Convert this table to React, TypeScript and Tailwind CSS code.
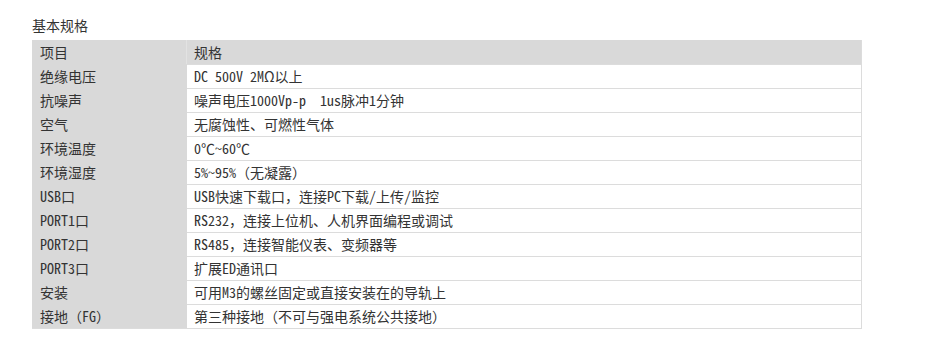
const rows: [string, string][] = [
  ['绝缘电压', 'DC 500V 2MΩ以上'],
  ['抗噪声', '噪声电压1000Vp-p  1us脉冲1分钟'],
  ['空气', '无腐蚀性、可燃性气体'],
  ['环境温度', '0℃~60℃'],
  ['环境湿度', '5%~95%（无凝露）'],
  ['USB口', 'USB快速下载口，连接PC下载/上传/监控'],
  ['PORT1口', 'RS232，连接上位机、人机界面编程或调试'],
  ['PORT2口', 'RS485，连接智能仪表、变频器等'],
  ['PORT3口', '扩展ED通讯口'],
  ['安装', '可用M3的螺丝固定或直接安装在的导轨上'],
  ['接地（FG）', '第三种接地（不可与强电系统公共接地）'],
];

const font = { fontFamily: '"Noto Sans Mono CJK SC", "Noto Sans CJK SC", monospace' };

export default function App() {
  return (
    <div className="h-[348px] w-[951px] bg-white pl-[32px] pt-[15px] text-[14px] text-[#333]" style={font}>
      <h3 className="mb-[5px] h-5 font-normal leading-5">基本规格</h3>

      <div className="w-[830px] border-r border-b border-[#dcdcdc]">
        {/* header */}
        <div className="grid h-[24px] grid-cols-[155px_1fr] bg-[#d9d9d9]">
          <div className="flex items-center border-r border-[#e2e2e2] pl-[8px]">项目</div>
          <div className="flex items-center pl-[7px]">规格</div>
        </div>

        {rows.map(([k, v]) => (
          <div key={k} className="grid h-[24px] grid-cols-[155px_1fr]">
            <div className="flex items-center bg-[#d9d9d9] pl-[8px]">{k}</div>
            <div className="flex items-center whitespace-pre border-t border-[#dcdcdc] pl-[7px]">{v}</div>
          </div>
        ))}
      </div>
    </div>
  );
}
